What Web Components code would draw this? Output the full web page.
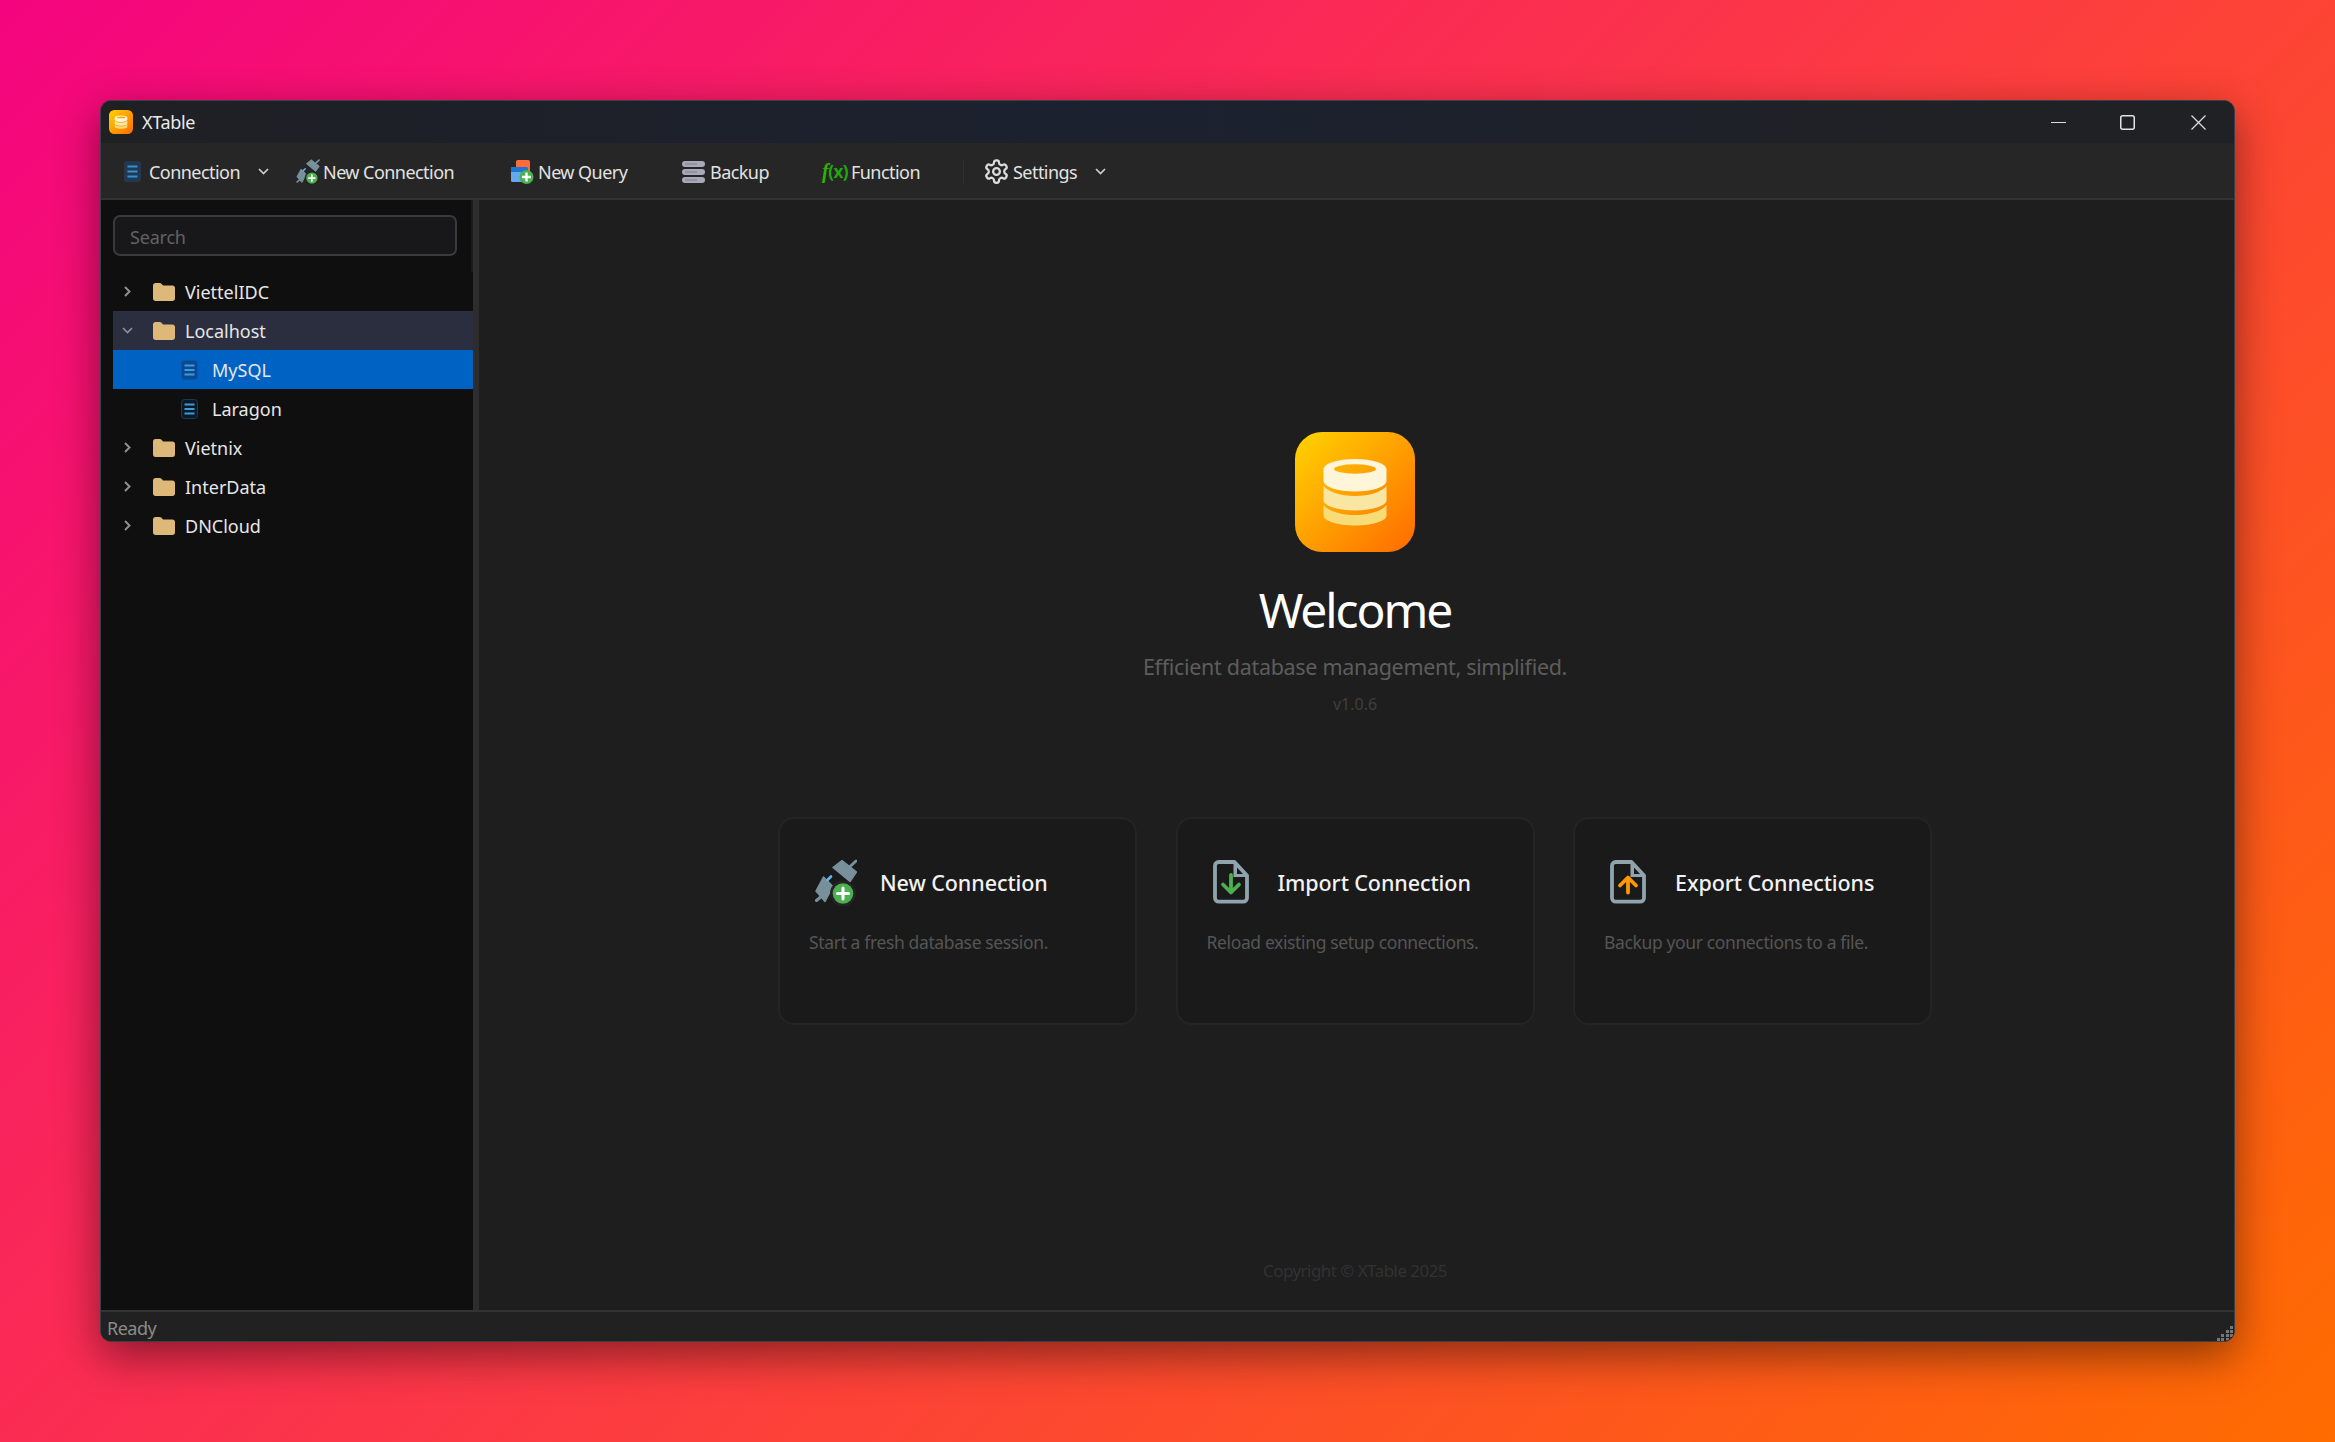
<!DOCTYPE html>
<html lang="en">
<head>
<meta charset="utf-8">
<title>XTable</title>
<style>
  html, body { margin: 0; padding: 0; }
  body { width: 2335px; height: 1442px; overflow: hidden; font-family: "Noto Sans", "Open Sans", sans-serif; }
</style>
</head>
<body>
<x-desktop>
  <x-window>
    <x-titlebar slot="title" label="XTable"></x-titlebar>
    <x-toolbar slot="tools">
      <x-tool-button icon="conn" gap="8" chevron="18" style="width:172px">Connection</x-tool-button>
      <x-tool-button icon="newconn" gap="3" style="width:215px">New Connection</x-tool-button>
      <x-tool-button icon="newquery" gap="4" style="width:171px">New Query</x-tool-button>
      <x-tool-button icon="backup" gap="5" style="width:140px">Backup</x-tool-button>
      <x-tool-button icon="func" gap="3" style="width:141px">Function</x-tool-button>
      <x-tool-sep></x-tool-sep>
      <x-tool-button icon="gear" gap="3" chevron="18" style="margin-left:19px">Settings</x-tool-button>
    </x-toolbar>
    <x-sidebar slot="side">
      <x-tree-row kind="folder" arrow="right">ViettelIDC</x-tree-row>
      <x-tree-row kind="folder" arrow="down" state="open">Localhost</x-tree-row>
      <x-tree-row kind="db" state="selected">MySQL</x-tree-row>
      <x-tree-row kind="db">Laragon</x-tree-row>
      <x-tree-row kind="folder" arrow="right">Vietnix</x-tree-row>
      <x-tree-row kind="folder" arrow="right">InterData</x-tree-row>
      <x-tree-row kind="folder" arrow="right">DNCloud</x-tree-row>
    </x-sidebar>
    <x-welcome slot="main">
      <x-action-card>
        <x-icon slot="icon" name="newconn" style="width:42px;height:47px;margin-left:6px"></x-icon>
        <span slot="title">New Connection</span>
        Start a fresh database session.
      </x-action-card>
      <x-action-card>
        <x-icon slot="icon" name="fileimport" style="width:36px;height:44px;margin-left:6px"></x-icon>
        <span slot="title">Import Connection</span>
        Reload existing setup connections.
      </x-action-card>
      <x-action-card>
        <x-icon slot="icon" name="fileexport" style="width:36px;height:44px;margin-left:6px"></x-icon>
        <span slot="title">Export Connections</span>
        Backup your connections to a file.
      </x-action-card>
    </x-welcome>
    <x-statusbar slot="status">Ready</x-statusbar>
  </x-window>
</x-desktop>

<script>
// Icons are kept in one map so the toolbar and the cards can share them
const ICONS = {
  logo: `<svg viewBox="0 0 120 120" width="100%" height="100%">
      <defs>
        <linearGradient id="bg" x1="0" y1="0" x2="1" y2="1"><stop offset="0" stop-color="#ffd400"/><stop offset="1" stop-color="#ff6a00"/></linearGradient>
      </defs>
      <rect width="120" height="120" rx="27" fill="url(#bg)"/>
      <path fill-rule="evenodd" d="M28.500 37a31.500 10 0 0 1 63 0v12a31.500 10.500 0 0 1-63 0zM39 37a21 4.700 0 0 0 42 0a21 4.700 0 0 0-42 0z" fill="#fff5d8"/>
      <path d="M28.500 54c5 6 17 10 31.500 10s26.500-4 31.500-10v14.500c0 5-14 10-31.500 10s-31.500-5-31.500-10z" fill="#f9e6a2"/>
      <path d="M28.500 73c5 6 17 10 31.500 10s26.500-4 31.500-10v10.500c0 5.500-14 10-31.500 10s-31.500-4.500-31.500-10z" fill="#f7dc78"/>
    </svg>`,
  conn: `<svg viewBox="0 0 17 21" width="100%" height="100%"><rect width="17" height="21" rx="2.500" fill="#23384f"/><path d="M3.500 5.500h10M3.500 10.500h10M3.500 15.500h10" stroke="#3291d6" stroke-width="2.200"/></svg>`,
  connTree: `<svg viewBox="0 0 17 20" width="100%" height="100%"><rect x=".5" y=".5" width="16" height="19" rx="3" fill="var(--db-fill,#0b1a28)" stroke="var(--db-line,#1c3a54)"/><path d="M3.500 5.500h10M3.500 10h10M3.500 14.500h10" stroke="#3d9bd8" stroke-width="2"/></svg>`,
  newconn: `<svg viewBox="0 0 42 47" width="100%" height="100%">
      <g fill="#78909c" stroke="#78909c" stroke-width="1.500" stroke-linejoin="round">
        <path d="M27 1.500 41.500 13 35 22.500 18 8.500z"/>
        <path d="M8.500 18 18 27.500 10 42.500 1 32z"/>
      </g>
      <path d="M34.500 8 41 2M8 36 1.500 41.500" stroke="#78909c" stroke-width="3" stroke-linecap="round"/>
      <path d="M12.500 21 16 17.500" stroke="#64b5f6" stroke-width="2.600" stroke-linecap="round"/>
      <circle cx="28" cy="34.500" r="13" fill="#232323"/>
      <circle cx="28" cy="34.500" r="10.300" fill="#4caf50"/>
      <path d="M28 29v11M22.500 34.500h11" stroke="#fff" stroke-width="3" stroke-linecap="round"/>
    </svg>`,
  newquery: `<svg viewBox="0 0 23 24" width="100%" height="100%">
      <rect x="5" y="0" width="14" height="14" rx="1.800" fill="#ff6a3a"/>
      <rect x="0" y="7" width="17" height="15" rx="1.500" fill="#64a8f0"/>
      <path d="M0 12V8.500C0 7.700.7 7 1.500 7h14c.8 0 1.500.7 1.500 1.500V12z" fill="#1976d2"/>
      <circle cx="15.500" cy="17" r="7" fill="#4caf50"/>
      <path d="M15.500 12.500v9M11 17h9" stroke="#fff" stroke-width="2.400"/>
    </svg>`,
  backup: `<svg viewBox="0 0 23 22" width="100%" height="100%">
      <g fill="#a8a8b8"><rect y="0" width="23" height="6" rx="3"/><rect y="8" width="23" height="6" rx="3"/><rect y="16" width="23" height="6" rx="3"/></g>
      <path d="M3 3h12M3 11h12M3 19h12" stroke="#7d7d8d" stroke-width="1.200"/>
    </svg>`,
  gear: `<svg viewBox="0 0 24 24" width="100%" height="100%" fill="none" stroke="#dcdcdc" stroke-width="2" stroke-linecap="round" stroke-linejoin="round">
      <path d="M12.220 2h-.44a2 2 0 0 0-2 2v.18a2 2 0 0 1-1 1.730l-.43.25a2 2 0 0 1-2 0l-.15-.08a2 2 0 0 0-2.730.73l-.22.38a2 2 0 0 0 .73 2.730l.15.1a2 2 0 0 1 1 1.720v.51a2 2 0 0 1-1 1.740l-.15.09a2 2 0 0 0-.73 2.730l.22.38a2 2 0 0 0 2.730.73l.15-.08a2 2 0 0 1 2 0l.43.25a2 2 0 0 1 1 1.730V20a2 2 0 0 0 2 2h.44a2 2 0 0 0 2-2v-.18a2 2 0 0 1 1-1.730l.43-.25a2 2 0 0 1 2 0l.15.08a2 2 0 0 0 2.730-.73l.22-.39a2 2 0 0 0-.73-2.730l-.15-.08a2 2 0 0 1-1-1.740v-.5a2 2 0 0 1 1-1.740l.15-.09a2 2 0 0 0 .73-2.730l-.22-.38a2 2 0 0 0-2.730-.73l-.15.08a2 2 0 0 1-2 0l-.43-.25a2 2 0 0 1-1-1.730V4a2 2 0 0 0-2-2z"/>
      <circle cx="12" cy="12" r="3"/>
    </svg>`,
  folder: `<svg viewBox="0 0 22 18" width="100%" height="100%"><path d="M0 2.500C0 1.100 1.100 0 2.500 0h4.200c.7 0 1.300.3 1.800.8L10 2.500h9.500C20.900 2.500 22 3.600 22 5v10.500c0 1.400-1.100 2.500-2.500 2.500h-17C1.100 18 0 16.900 0 15.500z" fill="#deb878"/></svg>`,
  fileimport: `<svg viewBox="0 0 36 44" width="100%" height="100%">
      <path d="M5.700 2h15.800L34 15.500V38c0 2-1.700 3.700-3.700 3.700H5.700C3.700 41.700 2 40 2 38V5.700C2 3.700 3.700 2 5.700 2z" fill="none" stroke="#90a4ae" stroke-width="3.800" stroke-linejoin="round"/>
      <path d="M20.500 2v15H34z" fill="#90a4ae"/>
      <path d="M24 7.500V14h6z" fill="#1a1a1a"/>
      <path d="M18 15v16.500M10 24.500l8 8 8-8" fill="none" stroke="#4caf50" stroke-width="3.800" stroke-linecap="round" stroke-linejoin="round"/>
    </svg>`,
  fileexport: `<svg viewBox="0 0 36 44" width="100%" height="100%">
      <path d="M5.700 2h15.800L34 15.500V38c0 2-1.700 3.700-3.700 3.700H5.700C3.700 41.700 2 40 2 38V5.700C2 3.700 3.700 2 5.700 2z" fill="none" stroke="#90a4ae" stroke-width="3.800" stroke-linejoin="round"/>
      <path d="M20.500 2v15H34z" fill="#90a4ae"/>
      <path d="M24 7.500V14h6z" fill="#1a1a1a"/>
      <path d="M18 32.500V18.500M10 25.500l8-8 8 8" fill="none" stroke="#ff9800" stroke-width="3.800" stroke-linecap="round" stroke-linejoin="round"/>
    </svg>`,
  chevron: `<svg viewBox="0 0 11 7" width="100%" height="100%"><path d="M1 1l4.500 4.500L10 1" fill="none" stroke="currentColor" stroke-width="1.700"/></svg>`,
  chevronRight: `<svg viewBox="0 0 7 11" width="100%" height="100%"><path d="M1 1l4.500 4.500L1 10" fill="none" stroke="currentColor" stroke-width="2"/></svg>`,
  grip: `<svg viewBox="0 0 16 16" width="100%" height="100%"><g fill="#777"><rect x="13" y="1" width="3" height="3"/><rect x="9" y="5" width="3" height="3"/><rect x="13" y="5" width="3" height="3"/><rect x="4" y="9" width="3" height="3"/><rect x="9" y="9" width="3" height="3"/><rect x="13" y="9" width="3" height="3"/><rect x="0" y="13" width="3" height="3"/><rect x="4" y="13" width="3" height="3"/><rect x="9" y="13" width="3" height="3"/><rect x="13" y="13" width="3" height="3"/></g></svg>`,
};

// Small base class: fills the shadow root from a html string
class ShadowElement extends HTMLElement {
  constructor() {
    super();
    this.attachShadow({ mode: "open" });
  }
  render(html) {
    const template = document.createElement("template");
    template.innerHTML = html;
    this.shadowRoot.appendChild(template.content.cloneNode(true));
  }
}

class XIcon extends ShadowElement {
  connectedCallback() {
    this.render(`<style>:host{display:block;flex:none;line-height:0}</style>${ICONS[this.getAttribute("name")] || ""}`);
  }
}
customElements.define("x-icon", XIcon);

class XDesktop extends ShadowElement {
  constructor() {
    super();
    this.render(`
      <style>
        :host {
          display: flex; box-sizing: border-box; width: 2335px; height: 1442px;
          padding: 100px 100px 100px 100px;
          background: linear-gradient(135deg, #f4047f 0%, #fc3845 50%, #ff6c00 100%);
        }
      </style>
      <slot></slot>`);
  }
}
customElements.define("x-desktop", XDesktop);

class XWindow extends ShadowElement {
  constructor() {
    super();
    this.render(`
      <style>
        :host {
          display: flex; flex-direction: column; box-sizing: border-box; width: 2135px; height: 1242px;
          border: 1px solid #3c3f45; border-radius: 11px; overflow: hidden;
          background: #1e1e1e; color: #e0e0e0;
          box-shadow: 0 14px 44px rgba(0,0,0,.45);
        }
        .body { flex: 1; min-height: 0; display: flex; }
        .splitter { flex: none; width: 6px; background: #2d2d2d; }
      </style>
      <slot name="title"></slot>
      <slot name="tools"></slot>
      <div class="body">
        <slot name="side"></slot>
        <div class="splitter"></div>
        <slot name="main"></slot>
      </div>
      <slot name="status"></slot>`);
  }
}
customElements.define("x-window", XWindow);

class XTitlebar extends ShadowElement {
  connectedCallback() {
    this.render(`
      <style>
        :host {
          display: flex; align-items: center; height: 42px; flex: none; padding-left: 8px;
          background: linear-gradient(90deg, #1e2024 0%, #1c2130 50%, #1f2125 85%);
        }
        .label { margin-left: 9px; font-size: 18px; color: #eaeaea; letter-spacing: -.35px; }
        .logo { width: 24px; height: 24px; }
        .ctl { margin-left: auto; display: flex; padding-right: 28px; }
        .ctl div { display: flex; align-items: center; justify-content: center; }
      </style>
      <x-icon class="logo" name="logo"></x-icon>
      <span class="label">${this.getAttribute("label")}</span>
      <div class="ctl">
        <div style="width:15px"><svg width="15" height="15"><path d="M0 7.500h15" stroke="#dcdcdc" stroke-width="1.200"/></svg></div>
        <div style="width:15px;margin-left:54px"><svg width="15" height="15"><rect x=".75" y=".75" width="13.500" height="13.500" rx="2" fill="none" stroke="#e4e4e4" stroke-width="1.500"/></svg></div>
        <div style="width:15px;margin-left:56px"><svg width="15" height="15"><path d="M.5.500l14 14M14.500.500l-14 14" stroke="#dcdcdc" stroke-width="1.300"/></svg></div>
      </div>`);
  }
}
customElements.define("x-titlebar", XTitlebar);

class XToolbar extends ShadowElement {
  constructor() {
    super();
    this.render(`
      <style>
        :host {
          display: flex; align-items: center; flex: none; box-sizing: border-box; height: 57px;
          padding: 2px 0 0 23px; background: #262626; border-bottom: 2px solid #333;
        }
      </style>
      <slot></slot>`);
  }
}
customElements.define("x-toolbar", XToolbar);

class XToolSep extends ShadowElement {
  constructor() {
    super();
    this.render(`<style>:host{display:block;flex:none;width:1px;height:26px;background:#2f2f2f}</style>`);
  }
}
customElements.define("x-tool-sep", XToolSep);

class XToolButton extends ShadowElement {
  connectedCallback() {
    const name = this.getAttribute("icon");
    const sizes = {
      conn: [17, 21], newconn: [24, 26], newquery: [23, 24], backup: [23, 22], func: [26, 20], gear: [27, 27],
    };
    const [w, h] = sizes[name];
    const icon = name === "func"
      ? `<span class="func"><i>f</i>(x)</span>`
      : `<x-icon name="${name}" style="width:${w}px;height:${h}px"></x-icon>`;
    const chevron = this.hasAttribute("chevron")
      ? `<x-icon class="chev" name="chevron" style="margin-left:${this.getAttribute("chevron")}px"></x-icon>`
      : "";
    this.render(`
      <style>
        :host { display: flex; align-items: center; flex: none; box-sizing: border-box; font-size: 18px; color: #e2e2e2; letter-spacing: -.55px; }
        .text { margin-left: ${this.getAttribute("gap")}px; white-space: nowrap; }
        .chev { width: 11px; height: 7px; color: #cfcfcf; }
        .func { display: block; width: 26px; font-size: 17px; font-weight: 700; color: #23a80f; letter-spacing: -.5px; white-space: nowrap; }
        .func i { font-family: "Liberation Serif", serif; font-size: 20px; color: #2fb300; }
      </style>
      ${icon}<span class="text"><slot></slot></span>${chevron}`);
  }
}
customElements.define("x-tool-button", XToolButton);

class XSidebar extends ShadowElement {
  constructor() {
    super();
    this.render(`
      <style>
        :host { display: flex; flex-direction: column; flex: none; box-sizing: border-box; width: 372px; background: #0f0f0f; }
        .search { box-sizing: border-box; height: 72px; padding: 15px 14px 16px 12px; border-right: 2px solid #1b1b1b; }
        input {
          display: block; box-sizing: border-box; width: 100%; height: 41px; padding: 2px 15px 0;
          font: 18px "Noto Sans", sans-serif; letter-spacing: -.2px; color: #ddd;
          background: #18181b; border: 2px solid #3a3a3a; border-radius: 7px; outline: none;
        }
        input::placeholder { color: #626262; opacity: 1; }
        .tree { display: flex; flex-direction: column; padding-left: 12px; }
      </style>
      <div class="search"><input type="text" placeholder="Search"></div>
      <div class="tree"><slot></slot></div>`);
  }
}
customElements.define("x-sidebar", XSidebar);

class XTreeRow extends ShadowElement {
  connectedCallback() {
    const kind = this.getAttribute("kind");
    const arrow = this.getAttribute("arrow");
    const state = this.getAttribute("state");
    let lead = "";
    if (kind === "folder") {
      const arrowIcon = arrow === "down"
        ? `<x-icon name="chevron" style="width:11px;height:7px"></x-icon>`
        : `<x-icon name="chevronRight" style="width:7px;height:11px"></x-icon>`;
      lead = `<span class="arrow">${arrowIcon}</span><x-icon name="folder" style="width:22px;height:18px"></x-icon><span class="gap" style="width:10px"></span>`;
    } else {
      lead = `<span style="width:68px;flex:none"></span><x-icon name="connTree" style="width:17px;height:20px"></x-icon><span class="gap" style="width:14px"></span>`;
    }
    const bg = state === "selected" ? "#0063c4" : state === "open" ? "#2b2e3f" : "transparent";
    this.render(`
      <style>
        :host {
          display: flex; align-items: center; height: 39px; box-sizing: border-box;
          background: ${bg}; font-size: 18px; color: #e6e6e6; letter-spacing: 0;
          --db-fill: ${state === "selected" ? "#0a4a94" : "#0b1a28"};
          --db-line: ${state === "selected" ? "#0a569f" : "#1c3a54"};
        }
        .arrow { display: flex; justify-content: center; width: 40px; flex: none; padding-right: 11px; box-sizing: border-box; color: #8f8f8f; }
        .gap { flex: none; }
      </style>
      ${lead}<span><slot></slot></span>`);
  }
}
customElements.define("x-tree-row", XTreeRow);

class XWelcome extends ShadowElement {
  constructor() {
    super();
    this.render(`
      <style>
        :host { display: flex; flex-direction: column; align-items: center; flex: 1; min-width: 0; padding: 232px 3px 0 0; box-sizing: border-box; }
        .logo { width: 120px; height: 120px; }
        h1 { margin: 28px 0 0; font-size: 48px; line-height: 60px; font-weight: 400; color: #fff; letter-spacing: -2.100px; }
        .sub { margin-top: 12px; font-size: 21.500px; line-height: 30px; color: #5d5d5d; letter-spacing: -.31px; }
        .ver { margin-top: 10px; font-size: 16px; line-height: 24px; color: #3f3f3f; }
        .cards { display: flex; gap: 38.500px; margin-top: 101px; }
        .copy { margin-top: auto; padding-bottom: 27px; font-size: 17px; line-height: 24px; color: #323232; letter-spacing: -.55px; }
      </style>
      <x-icon class="logo" name="logo"></x-icon>
      <h1>Welcome</h1>
      <div class="sub">Efficient database management, simplified.</div>
      <div class="ver">v1.0.6</div>
      <div class="cards"><slot></slot></div>
      <div class="copy">Copyright © XTable 2025</div>`);
  }
}
customElements.define("x-welcome", XWelcome);

class XActionCard extends ShadowElement {
  constructor() {
    super();
    this.render(`
      <style>
        :host {
          display: block; box-sizing: border-box; width: 359px; height: 208px; padding: 39px 0 0 29px;
          background: #1a1a1a; border: 2px solid #242424; border-radius: 16px;
          font-size: 17.500px; color: #555;
        }
        .head { display: flex; align-items: center; height: 48px; }
        .icon { display: block; width: 71px; flex: none; }
        .title { font-size: 21.500px; font-weight: 500; color: #f2f2f2; letter-spacing: -.08px; }
        .desc { margin-top: 23px; line-height: 26px; letter-spacing: -.37px; }
      </style>
      <div class="head">
        <div class="icon"><slot name="icon"></slot></div>
        <div class="title"><slot name="title"></slot></div>
      </div>
      <div class="desc"><slot></slot></div>`);
  }
}
customElements.define("x-action-card", XActionCard);

class XStatusbar extends ShadowElement {
  constructor() {
    super();
    this.render(`
      <style>
        :host {
          display: flex; align-items: center; flex: none; box-sizing: border-box; height: 31px; padding: 3px 0 0 6px;
          background: #212121; border-top: 2px solid #333; font-size: 18px; color: #8b8b8b; letter-spacing: -.5px;
        }
        .grip { margin-left: auto; align-self: flex-end; width: 16px; height: 16px; margin-right: 1px; }
      </style>
      <span><slot></slot></span>
      <x-icon class="grip" name="grip"></x-icon>`);
  }
}
customElements.define("x-statusbar", XStatusbar);
</script>
</body>
</html>
